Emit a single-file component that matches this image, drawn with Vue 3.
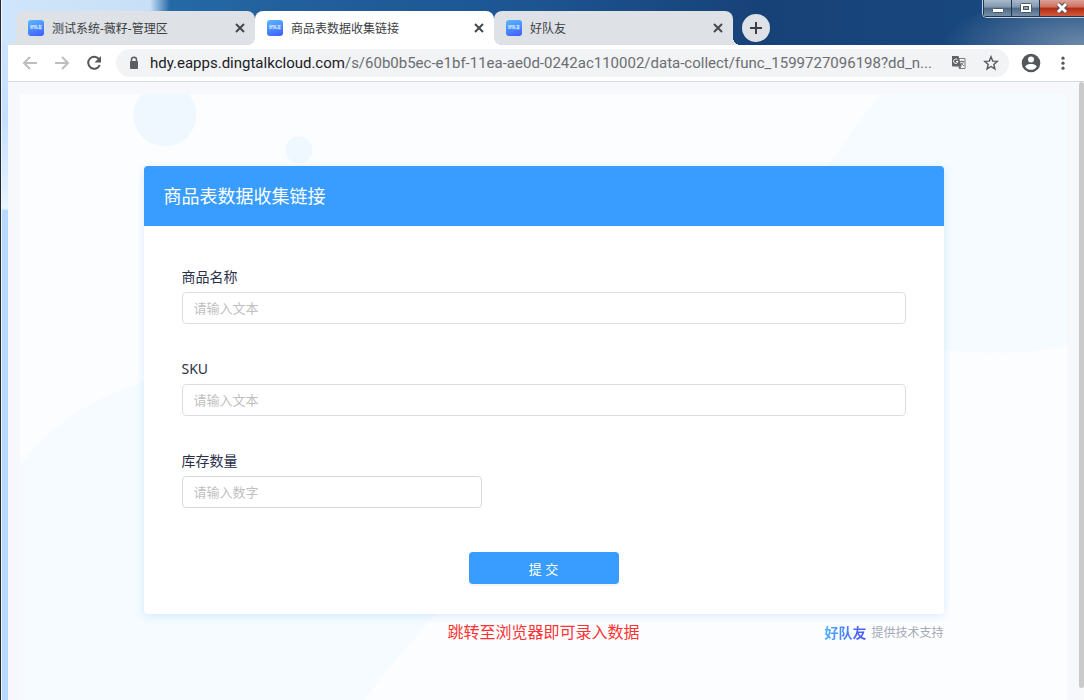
<script setup>
import { ref } from 'vue'

const tabs = [
  { title: '测试系统-薇籽-管理区', active: false },
  { title: '商品表数据收集链接', active: true },
  { title: '好队友', active: false }
]

const fields = ref([
  { id: 'name', label: '商品名称', hint: '请输入文本', value: '', narrow: false },
  { id: 'sku', label: 'SKU', hint: '请输入文本', value: '', narrow: false },
  { id: 'stock', label: '库存数量', hint: '请输入数字', value: '', narrow: true }
])
</script>

<template>
  <div class="window">
    <header class="titlebar">
      <nav class="tabs">
        <div v-for="tab in tabs" :key="tab.title" class="tab" :class="{ active: tab.active }">
          <span class="favicon">好队友</span>
          <span class="tab-title">{{ tab.title }}</span>
          <button class="icon-btn close" aria-label="关闭标签页">
            <svg width="16" height="16" viewBox="0 0 16 16"><path d="M4 4l8 8M12 4l-8 8" stroke="#45494d" stroke-width="2" /></svg>
          </button>
        </div>
        <button class="new-tab" aria-label="新标签页">
          <svg width="14" height="14" viewBox="0 0 14 14"><path d="M7 1v12M1 7h12" stroke="#3c4043" stroke-width="2" /></svg>
        </button>
      </nav>
      <div class="controls">
        <button class="control" aria-label="最小化">
          <svg width="14" height="12" viewBox="0 0 14 12"><rect x="1.500" y="6.500" width="11" height="4" rx="1" fill="#fff" stroke="#4a5868" /></svg>
        </button>
        <button class="control" aria-label="最大化">
          <svg width="14" height="12" viewBox="0 0 14 12"><rect x="1.500" y="1.500" width="11" height="9" rx="1" fill="#fff" stroke="#4a5868" /><rect x="4.500" y="4.500" width="5" height="3" fill="#8fa3b8" stroke="#4a5868" /></svg>
        </button>
        <button class="control quit" aria-label="关闭">
          <svg width="14" height="12" viewBox="0 0 14 12"><path d="M3 2l8 8M11 2l-8 8" stroke="#5b4a55" stroke-width="5" /><path d="M3 2l8 8M11 2l-8 8" stroke="#fff" stroke-width="3" /></svg>
        </button>
      </div>
    </header>

    <div class="toolbar">
      <button class="icon-btn" aria-label="后退">
        <svg width="16" height="16" viewBox="0 0 16 16" fill="none" stroke="#bcbec1" stroke-width="2"><path d="M15 8H2M8 2L2 8l6 6" /></svg>
      </button>
      <button class="icon-btn" aria-label="前进">
        <svg width="16" height="16" viewBox="0 0 16 16" fill="none" stroke="#bcbec1" stroke-width="2"><path d="M1 8h13M8 2l6 6-6 6" /></svg>
      </button>
      <button class="icon-btn" aria-label="重新加载">
        <svg width="16" height="16" viewBox="0 0 16 16"><path d="M13.200 4.500A6 6 0 1 0 13.800 10" fill="none" stroke="#54585c" stroke-width="2" /><path d="M15 1v6.500H8.500z" fill="#54585c" /></svg>
      </button>
      <div class="address">
        <svg class="lock" width="12" height="14" viewBox="0 0 12 14"><rect x="2" y="5" width="8" height="8" rx="1" fill="#5a5e62" /><path d="M3.500 6V3.800a2.500 2.500 0 0 1 5 0V6" fill="none" stroke="#5a5e62" stroke-width="1.500" /></svg>
        <span class="url"><b>hdy.eapps.dingtalkcloud.com</b>/s/60b0b5ec-e1bf-11ea-ae0d-0242ac110002/data-collect/func_1599727096198?dd_n...</span>
        <button class="icon-btn" aria-label="翻译">
          <svg width="16" height="16" viewBox="0 0 16 16"><path d="M6.500 3.500h7.500v10H8.500" fill="#f7f7f8" stroke="#7a7d81" /><path d="M8.500 6.500h5M11 5.500v1M12.500 6.500c-.5 2-1.500 3-3 4M10 8l3 3" fill="none" stroke="#7a7d81" /><path d="M1 1h6.500l3 10.500H2a1 1 0 0 1-1-1z" fill="#5f6368" /><path d="M7 11.500h3.500L8.500 14z" fill="#5f6368" /><path d="M6.500 4.800A2.200 2.200 0 1 0 7 6.500H5" fill="none" stroke="#fff" /></svg>
        </button>
        <button class="icon-btn" aria-label="收藏">
          <svg width="16" height="16" viewBox="0 0 16 16"><path d="M8 1.800l1.700 4.300 4.600.3-3.500 3 1.100 4.500L8 11.500l-3.900 2.400 1.100-4.500-3.500-3 4.600-.3z" fill="none" stroke="#54585c" stroke-width="1.400" /></svg>
        </button>
      </div>
      <button class="icon-btn profile" aria-label="用户">
        <svg width="20" height="20" viewBox="0 0 20 20"><circle cx="10" cy="10" r="9.300" fill="#54585c" /><circle cx="10" cy="6.500" r="3" fill="#fff" /><path d="M4.200 13.400C5.500 11.600 7.500 11 10 11s4.500.6 5.800 2.400C14.500 15.600 12.500 16.800 10 16.800s-4.500-1.200-5.800-3.400z" fill="#fff" /></svg>
      </button>
      <button class="icon-btn menu" aria-label="菜单">
        <svg width="16" height="16" viewBox="0 0 16 16" fill="#54585c"><circle cx="8" cy="3.200" r="1.600" /><circle cx="8" cy="8.200" r="1.600" /><circle cx="8" cy="13.200" r="1.600" /></svg>
      </button>
    </div>

    <div class="viewport">
      <main class="page">
        <svg class="backdrop" viewBox="0 0 1047 606" preserveAspectRatio="xMidYMin slice">
          <circle cx="145" cy="21" r="31.500" fill="#f0f8ff" />
          <circle cx="279" cy="56" r="13.500" fill="#f0f8ff" />
          <path d="M863 0C836 27 822 56 806 72C760 170 820 252 924 256C965 260 1010 260 1047 252V0z" fill="#f5fbff" />
          <path d="M0 372C30 330 75 302 124 288C240 270 480 390 416 520C390 550 370 570 345 606H0z" fill="#f5fbff" />
        </svg>
        <div class="content">
          <form class="card" @submit.prevent>
            <h1 class="card-title">商品表数据收集链接</h1>
            <div class="card-body">
              <div v-for="field in fields" :key="field.id" class="field">
                <label :for="field.id">{{ field.label }}</label>
                <input :id="field.id" v-model="field.value" type="text" :class="{ narrow: field.narrow }" :placeholder="field.hint" />
              </div>
              <button class="submit" type="submit">提 交</button>
            </div>
          </form>
          <footer class="foot">
            <p class="note">跳转至浏览器即可录入数据</p>
            <p class="support"><span class="brand">好队友</span>提供技术支持</p>
          </footer>
        </div>
      </main>
      <div class="scrollbar"><div class="thumb"></div></div>
    </div>
  </div>
</template>

<style>
body {
  margin: 0;
}
</style>

<style scoped>
.window {
  box-sizing: border-box;
  min-height: 100vh;
  display: flex;
  flex-direction: column;
  padding-left: 8px;
  font-family: "Noto Sans", "Noto Sans CJK SC", sans-serif;
  background:
    linear-gradient(#252a35, #252a35) 0 0 / 1px 100% no-repeat,
    linear-gradient(#eef7ff, #eef7ff) 1px 0 / 1px 100% no-repeat,
    radial-gradient(ellipse 140px 50px at 1084px 44px, #6c88a8, #5a7ba080 60%, #5a7ba000) 0 0 / 100% 45px no-repeat,
    linear-gradient(90deg, #cfe5fb 0, #c8e0f7 150px, #2569a7 170px, #225f9c 300px, #1d5593 520px, #174278 760px, #194a80 100%) 0 0 / 100% 45px no-repeat,
    linear-gradient(#cfe5fd, #c4e0ff 120px, #e9f4ff 209px, #b8daff 210px);
}
button {
  font-family: inherit;
  cursor: pointer;
}
.titlebar {
  height: 45px;
  display: flex;
  justify-content: space-between;
}
.tabs {
  display: flex;
  align-items: flex-end;
  padding-left: 8px;
}
.tab {
  position: relative;
  box-sizing: border-box;
  width: 239px;
  height: 34px;
  display: flex;
  align-items: center;
  gap: 8px;
  padding: 0 7px 0 12px;
  border-radius: 8px 8px 0 0;
  background: #dee1e6;
  color: #3c4043;
  font-size: 12px;
}
.tab::before,
.tab::after {
  content: "";
  position: absolute;
  bottom: 0;
  width: 8px;
  height: 8px;
}
.tab::before {
  left: -8px;
  background: radial-gradient(circle at 0 0, transparent 8px, #dee1e6 8px);
}
.tab::after {
  right: -8px;
  background: radial-gradient(circle at 100% 0, transparent 8px, #dee1e6 8px);
}
.tab.active {
  z-index: 1;
  background: #fff;
}
.tab.active::before {
  background: radial-gradient(circle at 0 0, transparent 8px, #fff 8px);
}
.tab.active::after {
  background: radial-gradient(circle at 100% 0, transparent 8px, #fff 8px);
}
.favicon {
  width: 16px;
  height: 16px;
  border-radius: 3px;
  background: linear-gradient(160deg, #59baff, #3d5cff);
  color: #e3f1ff;
  font-size: 4px;
  font-weight: 700;
  line-height: 16px;
  text-align: center;
}
.tab-title {
  flex: 1;
  overflow: hidden;
  white-space: nowrap;
}
.icon-btn {
  display: flex;
  flex: none;
  padding: 0;
  border: 0;
  background: none;
}
.new-tab {
  width: 28px;
  height: 28px;
  display: flex;
  align-items: center;
  justify-content: center;
  margin: 0 0 3px 9px;
  padding: 0;
  border: 0;
  border-radius: 50%;
  background: #dee1e6;
}
.controls {
  height: 17px;
  display: flex;
  border: 1px solid #c5d1df;
  border-width: 0 0 1px 1px;
  border-radius: 0 0 0 5px;
  overflow: hidden;
}
.control {
  width: 28px;
  display: flex;
  align-items: center;
  justify-content: center;
  padding: 0;
  border: 1px solid #1f3550;
  border-width: 0 0 1px 1px;
  background: linear-gradient(#a9bacb, #8298af 45%, #4d6884 50%, #7790a9);
}
.control.quit {
  width: 45px;
  background: linear-gradient(#dca298, #cc6e5e 45%, #b32a14 50%, #d05a3c);
}
.toolbar {
  height: 36px;
  display: flex;
  align-items: center;
  gap: 16px;
  padding: 0 13px 0 14px;
  border-bottom: 1px solid #d9dcdd;
  background: #fff;
}
.address {
  flex: 1;
  min-width: 0;
  height: 28px;
  display: flex;
  align-items: center;
  gap: 16px;
  margin: 0 -4px 0 -2px;
  padding: 0 10px 0 12px;
  border-radius: 14px;
  background: #f1f3f4;
}
.url {
  flex: 1;
  min-width: 0;
  margin-left: -6px;
  overflow: hidden;
  white-space: nowrap;
  color: #6b6e72;
  font-family: Roboto, "Noto Sans", sans-serif;
  font-size: 15px;
}
.url b {
  color: #202124;
  font-weight: 400;
}
.menu {
  margin-left: -2px;
}
.viewport {
  flex: 1;
  display: flex;
  background: #f6f8fc;
}
.page {
  position: relative;
  flex: 1;
  margin: 12px 12px 0;
  background: #fcfdff;
  overflow: hidden;
}
.backdrop {
  position: absolute;
  inset: 0;
  width: 100%;
  height: 100%;
}
.content {
  position: relative;
  max-width: 800px;
  margin: 0 auto;
  padding: 72px 0 40px;
}
.card {
  border-radius: 4px;
  background: #fff;
  box-shadow: 0 2px 8px #389dff30;
}
.card-title {
  margin: 0;
  padding: 0 20px;
  border-radius: 4px 4px 0 0;
  background: #389dff;
  color: #fff;
  font-size: 18px;
  font-weight: 400;
  line-height: 60px;
}
.card-body {
  display: flex;
  flex-direction: column;
  padding: 36px 38px 30px;
}
.field {
  display: flex;
  flex-direction: column;
  margin-bottom: 30px;
}
.field label {
  color: #2b2f4a;
  font-size: 14px;
  line-height: 30px;
}
.field input {
  box-sizing: border-box;
  height: 32px;
  padding: 0 11px;
  border: 1px solid #dcdce8;
  border-radius: 4px;
  background: #fff;
  font-family: inherit;
  font-size: 13px;
}
.field input.narrow {
  width: 300px;
  border-color: #d9d9d9;
}
.field input::placeholder {
  color: #bfbfbf;
}
.submit {
  align-self: center;
  width: 150px;
  height: 32px;
  margin-top: 14px;
  padding: 0;
  border: 0;
  border-radius: 4px;
  background: #389dff;
  box-shadow: 0 2px 0 #0000000b;
  color: #fff;
  font-size: 13px;
}
.foot {
  display: grid;
  grid-template-columns: 1fr auto 1fr;
  align-items: center;
  line-height: 34px;
}
.foot p {
  margin: 0;
}
.note {
  grid-column: 2;
  color: #ff3333;
  font-size: 16px;
}
.support {
  display: flex;
  align-items: center;
  justify-content: flex-end;
  gap: 5px;
  padding-top: 2px;
  color: #a5a8b3;
  font-size: 12px;
}
.brand {
  background: linear-gradient(100deg, #4db8ff, #4a4dff);
  background-clip: text;
  color: transparent;
  font-size: 14px;
  font-weight: 700;
}
.scrollbar {
  width: 5px;
  padding-bottom: 12px;
  display: flex;
  box-sizing: border-box;
  background: #f8f9fb;
}
.thumb {
  flex: 1;
  border-radius: 3px;
  background: #cacaca;
}
</style>
